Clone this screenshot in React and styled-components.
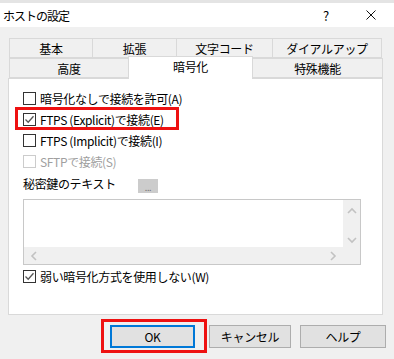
import React from 'react';
import styled, { createGlobalStyle } from 'styled-components';

const GlobalStyle = createGlobalStyle`
  html, body {
    margin: 0;
    padding: 0;
    background: #f0f0f0;
  }
  body {
    font-family: "Noto Sans CJK JP", "Noto Sans", sans-serif;
    font-size: 12px;
    letter-spacing: -0.35px;
    color: #000;
  }
`;

const Window = styled.div`
  width: 394px;
  height: 359px;
  background: #f0f0f0;
  display: flex;
  flex-direction: column;
  overflow: hidden;
`;

const TitleBar = styled.div`
  height: 24px;
  background: #fff;
  border-top: 3px solid #e4e4e4;
  display: flex;
  align-items: center;
  padding-left: 3px;
  padding-right: 14px;
  font-size: 12px;
`;

const Title = styled.div`
  flex: 1;
  letter-spacing: -1px;
`;

const TitleButton = styled.div`
  width: ${props => props.w}px;
  display: flex;
  justify-content: center;
  align-items: center;
  font-size: 13px;
`;

const Body = styled.div`
  padding: 11px 11px 0 8px;
  display: flex;
  flex-direction: column;
`;

const TabRows = styled.div`
  margin-left: 1px;
  display: flex;
  flex-direction: column;
`;

const TabRow = styled.div`
  display: flex;
  height: 20px;
  align-items: flex-end;
`;

const Tab = styled.div`
  box-sizing: border-box;
  width: ${props => props.w}px;
  height: ${props => (props.active ? 23 : 20)}px;
  margin-bottom: ${props => (props.active ? -1 : 0)}px;
  background: ${props => (props.active ? '#fff' : '#f0f0f0')};
  border: 1px solid #d9d9d9;
  border-bottom: ${props => (props.active ? 'none' : '1px solid #d9d9d9')};
  margin-left: -1px;
  display: flex;
  justify-content: center;
  align-items: center;
  padding-bottom: ${props => (props.active ? 3 : 0)}px;
  position: relative;
  z-index: ${props => (props.active ? 2 : 1)};
  &:first-child {
    margin-left: 0;
  }
`;

const Panel = styled.div`
  box-sizing: border-box;
  width: 375px;
  height: 237px;
  background: #fff;
  border: 1px solid #d9d9d9;
  padding: 9px 0 0 14px;
  display: flex;
  flex-direction: column;
`;

const Row = styled.label`
  position: relative;
  height: 21px;
  display: flex;
  align-items: center;
  gap: 4px;
  color: ${props => (props.disabled ? '#a0a0a0' : '#000')};
`;

const Box = styled.span`
  box-sizing: border-box;
  width: 13px;
  height: 13px;
  border: 1px solid ${props => (props.disabled ? '#cccccc' : '#333333')};
  background: #fff;
  display: flex;
  align-items: center;
  justify-content: center;
`;

const Highlight = styled.div`
  position: absolute;
  left: -8px;
  top: -2px;
  width: 164px;
  height: 23px;
  box-sizing: border-box;
  border: 3px solid #ee1111;
`;

const KeyRow = styled.div`
  height: 21px;
  display: flex;
  align-items: center;
  margin-top: 1px;
`;

const KeyLabel = styled.span`
  width: 115px;
`;

const DotButton = styled.div`
  width: 20px;
  height: 14px;
  margin-top: 4px;
  background: #cccccc;
  color: #777;
  font-size: 9px;
  display: flex;
  justify-content: center;
  align-items: flex-end;
  line-height: 10px;
`;

const TextArea = styled.div`
  box-sizing: border-box;
  width: 338px;
  height: 66px;
  margin-top: 5px;
  margin-bottom: 1px;
  border: 1px solid #c8c8c8;
  display: grid;
  grid-template-columns: 1fr 17px;
  grid-template-rows: 1fr 17px;
`;

const TextField = styled.div`
  background: #fff;
`;

const VScroll = styled.div`
  background: #f0f0f0;
  display: flex;
  flex-direction: column;
  justify-content: space-between;
  align-items: center;
  padding: 7px 0 3px;
`;

const HScroll = styled.div`
  grid-column: 1 / 3;
  background: #f0f0f0;
  display: flex;
  justify-content: space-between;
  align-items: center;
  padding: 0 23px 0 6px;
`;

const Footer = styled.div`
  display: flex;
  margin-top: 10px;
  margin-left: 102px;
`;

const ButtonFrame = styled.div`
  position: relative;
  margin-right: ${props => props.gap}px;
`;

const OkMark = styled.div`
  position: absolute;
  left: -9px;
  top: -6px;
  width: 106px;
  height: 34px;
  box-sizing: border-box;
  border: 3px solid #ee1111;
`;

const Button = styled.div`
  box-sizing: border-box;
  width: ${props => props.w}px;
  height: 23px;
  background: #e1e1e1;
  border: ${props => (props.primary ? '2px solid #0078d7' : '1px solid #adadad')};
  display: flex;
  justify-content: center;
  align-items: center;
`;

const Check = () => (
  <svg width="11" height="11" viewBox="0 0 11 11">
    <path d="M1.5 5.5 L4.2 8.2 L9.5 2.2" fill="none" stroke="#555" strokeWidth="1.3" />
  </svg>
);

const Chevron = ({ dir }) => {
  const paths = {
    up: 'M1 6 L5 2 L9 6',
    down: 'M1 2 L5 6 L9 2',
    left: 'M6 1 L2 5 L6 9',
    right: 'M2 1 L6 5 L2 9'
  };
  const vertical = dir === 'up' || dir === 'down';
  return (
    <svg width={vertical ? 10 : 8} height={vertical ? 8 : 10} viewBox={vertical ? '0 0 10 8' : '0 0 8 10'}>
      <path d={paths[dir]} fill="none" stroke="#c2c2c2" strokeWidth="1.6" />
    </svg>
  );
};

const CheckRow = ({ label, checked, disabled, marked }) => (
  <Row disabled={disabled}>
    {marked && <Highlight />}
    <Box disabled={disabled}>{checked && <Check />}</Box>
    <span>{label}</span>
  </Row>
);

const topTabs = [
  { label: '基本', w: 84 },
  { label: '拡張', w: 85 },
  { label: '文字コード', w: 97 },
  { label: 'ダイアルアップ', w: 110 }
];

const bottomTabs = [
  { label: '高度', w: 120 },
  { label: '暗号化', w: 125, active: true },
  { label: '特殊機能', w: 131 }
];

const App = () => (
  <Window>
    <GlobalStyle />
    <TitleBar>
      <Title>ホストの設定</Title>
      <TitleButton w={20}>?</TitleButton>
      <TitleButton w={26} />
      <TitleButton w={18}>
        <svg width="10" height="10" viewBox="0 0 10 10">
          <path d="M0.5 0.5 L9.5 9.5 M9.5 0.5 L0.5 9.5" stroke="#111" strokeWidth="1" />
        </svg>
      </TitleButton>
    </TitleBar>
    <Body>
      <TabRows>
        <TabRow>
          {topTabs.map(t => (
            <Tab key={t.label} w={t.w}>{t.label}</Tab>
          ))}
        </TabRow>
        <TabRow>
          {bottomTabs.map(t => (
            <Tab key={t.label} w={t.w} active={t.active}>{t.label}</Tab>
          ))}
        </TabRow>
      </TabRows>
      <Panel>
        <CheckRow label="暗号化なしで接続を許可(A)" />
        <CheckRow label="FTPS (Explicit)で接続(E)" checked marked />
        <CheckRow label="FTPS (Implicit)で接続(I)" />
        <CheckRow label="SFTPで接続(S)" disabled />
        <KeyRow>
          <KeyLabel>秘密鍵のテキスト</KeyLabel>
          <DotButton>...</DotButton>
        </KeyRow>
        <TextArea>
          <TextField />
          <VScroll>
            <Chevron dir="up" />
            <Chevron dir="down" />
          </VScroll>
          <HScroll>
            <Chevron dir="left" />
            <Chevron dir="right" />
          </HScroll>
        </TextArea>
        <CheckRow label="弱い暗号化方式を使用しない(W)" checked />
      </Panel>
      <Footer>
        <ButtonFrame gap={14}>
          <OkMark />
          <Button w={85} primary>OK</Button>
        </ButtonFrame>
        <ButtonFrame gap={9}>
          <Button w={82}>キャンセル</Button>
        </ButtonFrame>
        <ButtonFrame gap={0}>
          <Button w={86}>ヘルプ</Button>
        </ButtonFrame>
      </Footer>
    </Body>
  </Window>
);

export default App;
